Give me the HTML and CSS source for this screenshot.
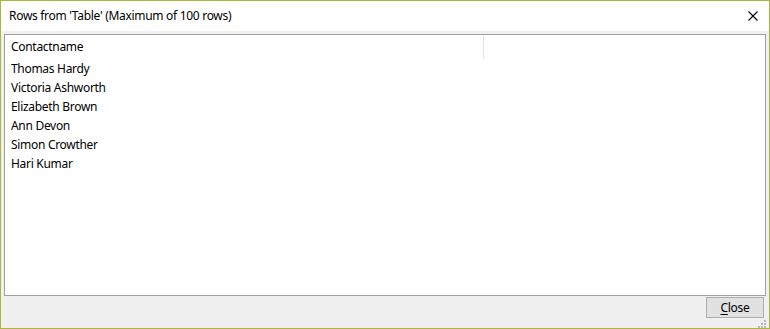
FILE: index.html
```html
<!DOCTYPE html>
<html lang="en">
<head>
  <meta charset="UTF-8">
  <title>Rows from 'Table'</title>
  <link rel="stylesheet" href="styles.css">
</head>
<body>

<div class="window">
  <div class="titlebar">
    <span class="title">Rows from 'Table' (Maximum of 100 rows)</span>
    <svg class="close-x" width="10" height="10" viewBox="0 0 10 10">
      <path d="M0.5 0.5 L9.5 9.5 M9.5 0.5 L0.5 9.5" stroke="#000" stroke-width="1.1" fill="none"/>
    </svg>
  </div>

  <div class="client">
    <div class="listview">
      <div class="lv-header">
        <div class="lv-col">Contactname</div>
        <div class="lv-col lv-col-rest"></div>
      </div>
      <div class="lv-rows">
        <div class="lv-row">Thomas Hardy</div>
        <div class="lv-row">Victoria Ashworth</div>
        <div class="lv-row">Elizabeth Brown</div>
        <div class="lv-row">Ann Devon</div>
        <div class="lv-row">Simon Crowther</div>
        <div class="lv-row">Hari Kumar</div>
      </div>
    </div>

    <div class="footer">
      <button class="btn"><u>C</u>lose</button>
      <div class="grip">
        <i></i><i></i><i></i><i></i><i></i><i></i>
      </div>
    </div>
  </div>
</div>

</body>
</html>
```

FILE: styles.css
```css
html, body {
  margin: 0; padding: 0;
  background: #fff;
}
body {
  font-family: 'Noto Sans', 'Segoe UI', Arial, sans-serif;
  font-size: 12px;
  letter-spacing: -0.3px;
  color: #000;
}

.window {
  width: 770px;
  height: 329px;
  box-sizing: border-box;
  border: 1px solid #abb73c;
  display: flex;
  flex-direction: column;
  background: #f0f0f0;
}

/* Заголовок окна */
.titlebar {
  height: 30px;
  background: #fff;
  display: flex;
  align-items: center;
  justify-content: space-between;
  padding: 0 11px 0 8px;
  flex-shrink: 0;
}
.title { line-height: 16px; padding-bottom: 1px; }
.close-x { display: block; margin-top: -1px; }

/* Клиентская часть */
.client {
  flex: 1;
  display: flex;
  flex-direction: column;
  padding: 3px 3px 0 3px;
}
.listview {
  height: 262px;
  box-sizing: border-box;
  border: 1px solid #a0a0a0;
  background: #fff;
}
.lv-header {
  display: flex;
  height: 24px;
}
.lv-col {
  width: 479px;
  box-sizing: border-box;
  padding-left: 6px;
  line-height: 23px;
  border-right: 1px solid #e5e5e5;
}
.lv-col-rest { flex: 1; border-right: none; }
.lv-row {
  height: 19px;
  line-height: 20px;
  padding-left: 6px;
}

.footer {
  flex: 1;
  position: relative;
  display: flex;
  justify-content: flex-end;
  align-items: flex-start;
  padding: 1px 2px 0 0;
}
.btn {
  width: 58px;
  height: 21px;
  box-sizing: border-box;
  border: 1px solid #adadad;
  background: #e1e1e1;
  font-family: inherit;
  font-size: 12px;
  letter-spacing: -0.3px;
  color: #000;
  padding: 0 0 1px 0;
  margin: 0;
}
.btn u { text-decoration-thickness: 1px; text-underline-offset: 2px; }

.grip {
  position: absolute;
  right: 0;
  bottom: 0;
  width: 8px;
  height: 8px;
}
.grip i {
  position: absolute;
  width: 2px;
  height: 2px;
  background: #b9b9b9;
}
.grip i:nth-child(1) { right: 0; bottom: 0; }
.grip i:nth-child(2) { right: 3px; bottom: 0; }
.grip i:nth-child(3) { right: 6px; bottom: 0; }
.grip i:nth-child(4) { right: 0; bottom: 3px; }
.grip i:nth-child(5) { right: 3px; bottom: 3px; }
.grip i:nth-child(6) { right: 0; bottom: 6px; }
```
